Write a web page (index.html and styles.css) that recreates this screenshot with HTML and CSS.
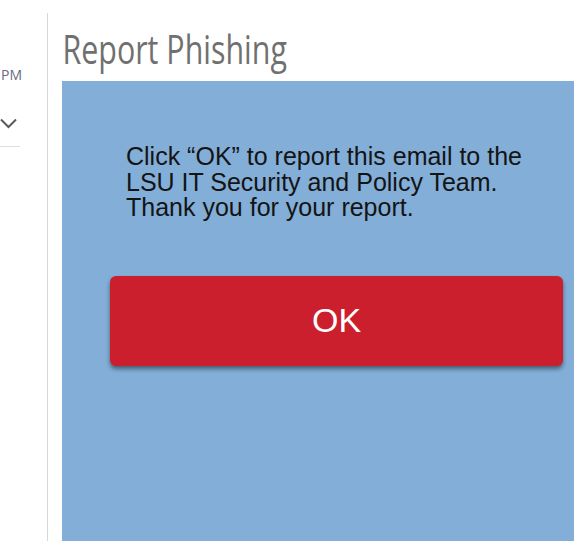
FILE: index.html
```html
<!DOCTYPE html>
<html lang="en">
<head>
<meta charset="utf-8">
<title>Report Phishing</title>
<link rel="stylesheet" href="styles.css">
</head>
<body>
<div class="side">
  <div class="side-inner">
    <div class="time">PM</div>
    <div class="chev">
      <svg width="17" height="11" viewBox="0 0 17 11"><path d="M1 1.5 L8.5 9 L16 1.5" fill="none" stroke="#5a5a5a" stroke-width="2"/></svg>
    </div>
    <div class="rule"></div>
  </div>
</div>
<div class="divider"></div>
<div class="main">
  <div class="title"><span class="title-text">Report Phishing</span></div>
  <div class="panel">
    <p class="message">Click “OK” to report this email to the<br>LSU IT Security and Policy Team.<br>Thank you for your report.</p>
    <button class="ok">OK</button>
  </div>
</div>
</body>
</html>
```

FILE: styles.css
```css
html, body {
  margin: 0;
  padding: 0;
}
body {
  width: 574px;
  height: 541px;
  overflow: hidden;
  display: flex;
  background: #ffffff;
}
.side {
  width: 47px;
  flex: none;
}
.side-inner {
  width: 20px;
  padding-top: 65px;
}
.time {
  font-family: "Open Sans", sans-serif;
  font-size: 14px;
  line-height: 19px;
  color: #6a6a86;
  padding-left: 1px;
}
.chev {
  margin-top: 34px;
  height: 11px;
  line-height: 0;
}
.chev svg {
  display: block;
}
.rule {
  margin-top: 17px;
  height: 1px;
  background: #dedede;
}
.divider {
  width: 1px;
  flex: none;
  margin-top: 13px;
  background: #d8d8d8;
}
.main {
  flex: 1;
  margin-top: 13px;
  padding-left: 14px;
  display: flex;
  flex-direction: column;
  min-width: 0;
}
.title {
  height: 68px;
  box-sizing: border-box;
  padding-top: 12px;
  white-space: nowrap;
}
.title-text {
  display: inline-block;
  font-family: "Open Sans", sans-serif;
  font-size: 40px;
  line-height: 48px;
  color: #707070;
  transform: scaleX(0.76);
  transform-origin: 2px 0;
}
.panel {
  flex: 1;
  background: #82aed8;
  padding: 63px 11px 0 48px;
}
.message {
  margin: 0 0 55px 16px;
  font-family: "Liberation Sans", Arial, sans-serif;
  font-size: 25px;
  line-height: 25.5px;
  color: #141414;
}
.ok {
  display: block;
  width: 100%;
  height: 90px;
  border: none;
  border-radius: 6px;
  background: #cc1f2e;
  color: #ffffff;
  font-family: "Liberation Sans", Arial, sans-serif;
  font-size: 34px;
  padding: 0;
  box-shadow: 0 3px 4px rgba(0, 0, 0, 0.45);
}
```
